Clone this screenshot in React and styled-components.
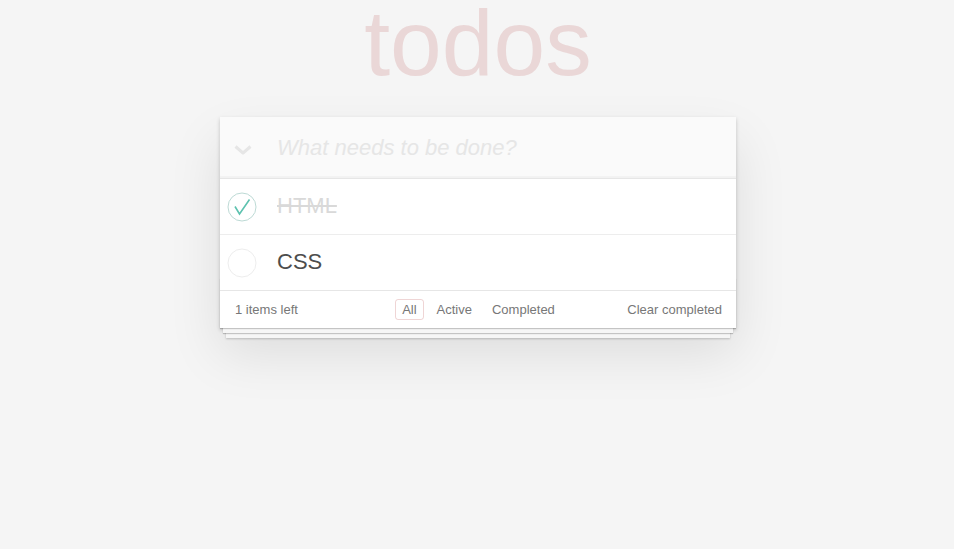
import React from 'react';
import styled, { createGlobalStyle } from 'styled-components';

const GlobalStyle = createGlobalStyle`
  html, body {
    margin: 0;
    padding: 0;
    height: 100%;
  }
  body {
    background: #f5f5f5;
    font-family: "Liberation Sans", Arial, sans-serif;
    font-size: 13px;
    color: #4d4d4d;
    -webkit-font-smoothing: antialiased;
  }
  #root {
    min-height: 100%;
  }
`;

const Page = styled.div`
  display: flex;
  flex-direction: column;
  align-items: center;
  min-height: 100vh;
  padding-left: 2px;
  box-sizing: border-box;
`;

const Title = styled.h1`
  margin: 0 0 30px;
  height: 87px;
  line-height: 87px;
  font-size: 93px;
  font-weight: 100;
  color: rgba(175, 47, 47, 0.15);
  text-align: center;
`;

const TodoApp = styled.section`
  position: relative;
  z-index: 0;
  width: 516px;
  background: #fff;
  box-shadow: 0 2px 4px 0 rgba(0, 0, 0, 0.2), 0 25px 50px 0 rgba(0, 0, 0, 0.1);
`;

const Header = styled.header`
  display: flex;
  align-items: center;
  height: 61px;
  background: #fafafa;
  box-shadow: inset 0 -2px 1px rgba(0, 0, 0, 0.03);
`;

const ToggleAll = styled.div`
  display: flex;
  align-items: center;
  justify-content: center;
  width: 46px;
  margin-top: 4px;
`;

const NewTodo = styled.input`
  flex: 1;
  margin-left: 11px;
  border: none;
  outline: none;
  background: transparent;
  font-family: inherit;
  font-size: 22px;
  color: #4d4d4d;
  padding: 0;
  &::placeholder {
    font-style: italic;
    font-weight: 300;
    color: #e6e6e6;
  }
`;

const List = styled.ul`
  margin: 0;
  padding: 0;
  list-style: none;
  border-top: 1px solid #e6e6e6;
  background: #fff;
`;

const Item = styled.li`
  display: flex;
  align-items: center;
  height: 55px;
  padding-left: 7px;
  border-bottom: 1px solid #ededed;
  &:last-child {
    border-bottom: none;
  }
`;

const Label = styled.label`
  margin-left: 20px;
  font-size: 22px;
  line-height: 1.2;
  color: ${(p) => (p.$done ? '#d9d9d9' : '#4d4d4d')};
  text-decoration: ${(p) => (p.$done ? 'line-through' : 'none')};
`;

const Footer = styled.footer`
  position: relative;
  display: grid;
  grid-template-columns: 1fr auto 1fr;
  align-items: center;
  height: 37px;
  padding: 0 14px 0 15px;
  border-top: 1px solid #e6e6e6;
  background: #fff;
  color: #777;
  font-size: 13px;

  &::before {
    content: '';
    position: absolute;
    left: 0;
    right: 0;
    bottom: 0;
    height: 50px;
    z-index: -1;
    box-shadow: 0 1px 1px rgba(0, 0, 0, 0.2), 0 8px 0 -3px #f6f6f6,
      0 9px 1px -3px rgba(0, 0, 0, 0.2), 0 16px 0 -6px #f6f6f6,
      0 17px 2px -6px rgba(0, 0, 0, 0.2);
  }
`;

const Count = styled.span`
  justify-self: start;
`;

const Filters = styled.ul`
  display: flex;
  margin: 0;
  padding: 0;
  list-style: none;
`;

const Filter = styled.a`
  display: block;
  margin: 0 3px;
  padding: 2px 6px 2px;
  border: 1px solid ${(p) => (p.$selected ? 'rgba(175, 47, 47, 0.2)' : 'transparent')};
  border-radius: 3px;
  color: inherit;
  text-decoration: none;
  line-height: 15px;
  cursor: pointer;
`;

const Clear = styled.button`
  justify-self: end;
  border: none;
  background: none;
  padding: 0;
  font-family: inherit;
  font-size: 13px;
  color: inherit;
  cursor: pointer;
`;

function Chevron() {
  return (
    <svg width="18" height="10" viewBox="0 0 18 10">
      <polyline points="1.5,1.5 9,8 16.5,1.5" fill="none" stroke="#e6e6e6" strokeWidth="3" strokeLinejoin="round" />
    </svg>
  );
}

function Check({ done }) {
  return (
    <svg width="30" height="30" viewBox="0 0 30 30">
      <circle cx="15" cy="15" r="14" fill="none" stroke={done ? '#bddad5' : '#ededed'} strokeWidth="1" />
      {done && (
        <polyline points="8,14.5 12.5,22 22.5,7.5" fill="none" stroke="#5dc2af" strokeWidth="1.6" />
      )}
    </svg>
  );
}

const todos = [
  { id: 1, title: 'HTML', done: true },
  { id: 2, title: 'CSS', done: false },
];

export default function App() {
  return (
    <>
      <GlobalStyle />
      <Page>
        <Title>todos</Title>
        <TodoApp>
          <Header>
            <ToggleAll>
              <Chevron />
            </ToggleAll>
            <NewTodo placeholder="What needs to be done?" />
          </Header>
          <List>
            {todos.map((t) => (
              <Item key={t.id}>
                <Check done={t.done} />
                <Label $done={t.done}>{t.title}</Label>
              </Item>
            ))}
          </List>
          <Footer>
            <Count>1 items left</Count>
            <Filters>
              <li><Filter $selected>All</Filter></li>
              <li><Filter>Active</Filter></li>
              <li><Filter>Completed</Filter></li>
            </Filters>
            <Clear>Clear completed</Clear>
          </Footer>
        </TodoApp>
      </Page>
    </>
  );
}
